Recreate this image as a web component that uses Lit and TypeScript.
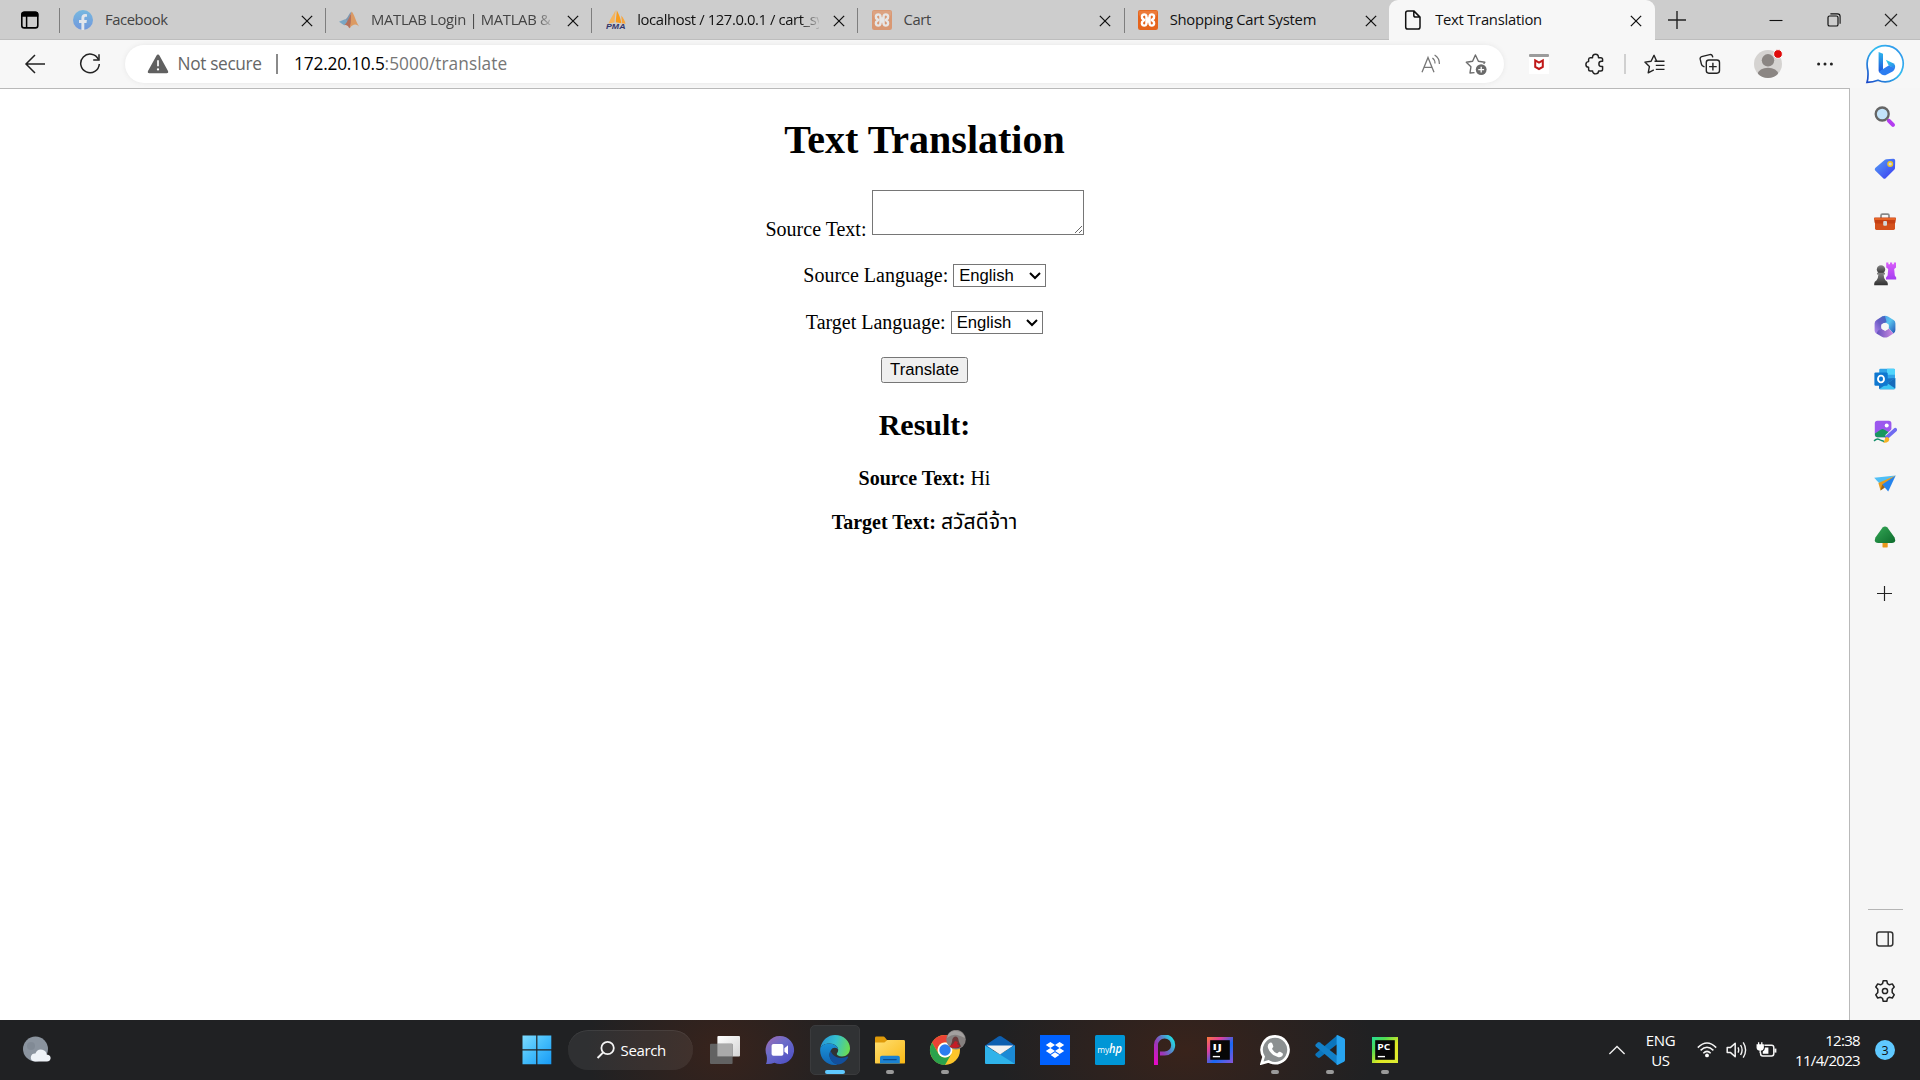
import { LitElement, html, svg, css, nothing } from "lit";
import { customElement, property } from "lit/decorators.js";

const box = (w: number, h: number, body: unknown, vb = `0 0 ${w} ${h}`) =>
  html`<svg width=${w} height=${h} viewBox=${vb} fill="none">${body}</svg>`;

/* ---------- browser chrome icons ---------- */
const cross = (s: number, c = "#111", w = 1.5) =>
  box(s, s, svg`<path d="M1 1L13 13M13 1L1 13" stroke=${c} stroke-width=${w}/>`, "0 0 14 14");

const tabActions = box(20, 20, svg`<rect x="1.8" y="2.3" width="16" height="15.6" rx="2.4" stroke="#000" stroke-width="1.6"/><path d="M1.5 6.8V4.6Q1.5 1.6 4.5 1.6H15.3Q18.3 1.6 18.3 4.6V6.8Z" fill="#000"/><path d="M6.6 6V17.6" stroke="#000" stroke-width="1.5"/>`);

const facebook = box(20, 20, svg`<defs><linearGradient id="f" x1="0" y1="0" x2="0" y2="1"><stop stop-color="#76b8e0"/><stop offset="1" stop-color="#7197dc"/></linearGradient></defs><circle cx="10" cy="10" r="10" fill="url(#f)"/><path d="M8.4 19.9V13H6V10.1H8.4V7.9C8.4 5.3 9.9 4 12.1 4L14 4.2V6.7H12.8C11.6 6.7 11.3 7.4 11.3 8.2V10.1H13.9L13.5 13H11.3V19.9Z" fill="#e3e6ec"/>`);

const matlab = box(20, 20, svg`<path d="M0 11.8L6 9.3L9 12.4L5.2 15.2Z" fill="#79a6c4"/><path d="M6 9.3C8.5 9 10 3.5 12.4 1.8L9 12.4Z" fill="#7d97b0"/><path d="M5.2 15.2C8.5 14 9.6 17.4 10.4 18.2C12.5 17.2 12 12 12.8 2C10.5 5.5 9.5 11.5 5.2 15.2Z" fill="#b4705b"/><path d="M12.6 1.6C15 3.5 17 12 20 16.6C17.4 13.4 14 13.6 10.4 18.2C12.6 14 11.6 6 12.6 1.6Z" fill="#dc9a62"/>`);

const pma = box(20, 20, svg`<path d="M9.5 0C8 4 4 9 2.5 13.5L8.6 12.4C8.4 8 9.8 4 9.5 0Z" fill="#f5b45d"/><path d="M10.8 .2C10.6 5 9.8 9 9.8 12.2L15.4 13.2C14.6 8 12.8 4 10.8 .2Z" fill="#f89c1c"/><path d="M15.2 5.6L16 13.3L19.6 13.8C18.6 10.5 17.2 8 15.2 5.6Z" fill="#f9a53a"/><text x="0" y="19" font-family="Liberation Sans" font-size="7.6" font-weight="700" font-style="italic" fill="#33366b" textLength="19.5" lengthAdjust="spacingAndGlyphs">PMA</text>`);

const xampp = (dim: boolean) => box(20, 20, svg`<g opacity=${dim ? 0.5 : 1}><rect width="20" height="20" rx="2.2" fill="#e5641c"/><rect x=".8" y=".8" width="18.4" height="5" rx="1.4" fill="#f08b4f" opacity=".6"/><path d="M6.3 4.4C3.4 4.4 3.2 8 5.2 9.1L6.3 10L5.2 10.9C3.2 12 3.4 15.6 6.3 15.6C8.7 15.6 8.6 13.2 8.4 11.6H11.6C11.4 13.2 11.3 15.6 13.7 15.6C16.6 15.6 16.8 12 14.8 10.9L13.7 10L14.8 9.1C16.8 8 16.6 4.4 13.7 4.4C11.3 4.4 11.4 6.8 11.6 8.4H8.4C8.6 6.8 8.7 4.4 6.3 4.4Z" stroke="#fff" stroke-width="2.45" stroke-linejoin="round"/><path d="M7.4 10H12.6" stroke="#fff" stroke-width="2"/></g>`);

const pageIcon = box(20, 20, svg`<path d="M4.8 .9H10.8L17 7.1V17Q17 19.1 14.9 19.1H4.8Q2.7 19.1 2.7 17V3Q2.7 .9 4.8 .9ZM10.8 1V5.2Q10.8 7.1 12.7 7.1H17" stroke="#111" stroke-width="1.5" stroke-linejoin="round"/>`);

const plus = (s: number, c = "#222") => box(s, s, svg`<path d="M9 0V18M0 9H18" stroke=${c} stroke-width="1.4"/>`, "0 0 18 18");
const minimize = box(14, 14, svg`<path d="M.5 7.5H13.5" stroke="#111" stroke-width="1.1"/>`);
const restore = box(14, 14, svg`<rect x="1" y="3" width="10" height="10" rx="1.6" stroke="#111" stroke-width="1.2"/><path d="M3.4 .9H10.5Q13.1 .9 13.1 3.5V10.8" stroke="#111" stroke-width="1.1"/>`);

const back = box(22, 20, svg`<path d="M11 1L2 10L11 19M2 10H21" stroke="#222" stroke-width="1.5"/>`);
const refresh = box(22, 22, svg`<path d="M19.4 6.4A9.3 9.3 0 1 0 20.3 11" stroke="#222" stroke-width="1.5"/><path d="M20 1.2V6.9H14.2" stroke="#222" stroke-width="1.5"/>`);
const warning = box(22, 20, svg`<path d="M11 .6Q12 .6 12.6 1.7L21 17Q21.8 19.2 19.6 19.2H2.4Q.2 19.2 1 17L9.4 1.7Q10 .6 11 .6Z" fill="#606060"/><path d="M11 6.3V12.3" stroke="#fff" stroke-width="1.7"/><circle cx="11" cy="15.4" r="1.15" fill="#fff"/>`);
const readAloud = box(20, 20, svg`<path d="M1 18.2L7 3.4L13 18.2M3 13.3H11" stroke="#777" stroke-width="1.3"/><path d="M11.4 4Q14 5.8 14 9.4M13.6 .9Q18.6 4 18.4 10" stroke="#777" stroke-width="1.2"/>`);
const starAdd = box(22, 22, svg`<path d="M9.5 19.6L5 20L5.9 13.8L1.3 9.3L7.6 8.3L10.4 2L13.4 8.3L19.8 9.3L18.6 10.8" stroke="#6d6d6d" stroke-width="1.4" stroke-linejoin="round"/><circle cx="16.2" cy="16.6" r="5.4" fill="#6a6a6a"/><path d="M16.2 13.7V19.5M13.3 16.6H19.1" stroke="#fff" stroke-width="1.3"/>`);
const mcafee = box(20, 20, svg`<rect width="20" height="20" fill="#fff"/><rect width="20" height="3" rx="1" fill="#9c9c9c"/><path d="M6.2 6.4L10 8.6L13.8 6.4V12.9L10 15L6.2 12.9Z" stroke="#c01818" stroke-width="2"/>`);
const puzzle = box(20, 22, svg`<path d="M5.2 4.7H7.5C7.5 .2 13.5 .2 13.5 4.7H15.8Q17.6 4.7 17.6 6.5V8.3H16.6C13 8.3 13 13.5 16.6 13.5H17.6V16.2Q17.6 18 15.8 18H13.6C13.6 21.8 7.6 21.8 7.6 18H5.4Q3.6 18 3.6 16.2V14.3C0 14.3 0 8.6 3.6 8.6V6.5Q3.6 4.7 5.2 4.7Z" stroke="#222" stroke-width="1.45" stroke-linejoin="round"/>`);
const favorites = box(21, 20, svg`<path d="M10.5 7.2H12.7L10 1.3L7.1 7.2L.9 8.1L5.4 12.6L4.2 18.8L9.8 15.8" stroke="#222" stroke-width="1.4" stroke-linejoin="round"/><path d="M12.4 7.2H20.5M11.8 11.4H20.5M11.8 15.4H20.5" stroke="#222" stroke-width="1.4"/>`);
const collections = box(22, 22, svg`<path d="M5.5 13.8L4.4 13.4Q2.8 12.8 2.4 11.2L1.2 6.2Q.8 4.2 2.6 3.7L10.8 1.6Q12.8 1.2 13.4 3L13.8 4.4" stroke="#222" stroke-width="1.4"/><rect x="7.3" y="7" width="13.2" height="13.2" rx="2.6" stroke="#222" stroke-width="1.4"/><path d="M13.9 9.8V17.4M10.1 13.6H17.7" stroke="#222" stroke-width="1.4"/>`);
const avatar = box(30, 30, svg`<defs><clipPath id="av"><circle cx="15" cy="15" r="14"/></clipPath></defs><circle cx="15" cy="15" r="14" fill="#d5d3d1"/><g clip-path="url(#av)" fill="#8b8683"><circle cx="15" cy="11.3" r="6.2"/><ellipse cx="15" cy="25" rx="10" ry="6.2"/></g><circle cx="25" cy="5" r="4.4" fill="#e00b0b" stroke="#f7f7f7"/>`);
const dots = box(18, 6, svg`<g fill="#222"><circle cx="2.6" cy="3" r="1.5"/><circle cx="9" cy="3" r="1.5"/><circle cx="15.4" cy="3" r="1.5"/></g>`);
const bing = box(40, 40, svg`<defs><linearGradient id="b1" x1="1" y1="0" x2="0" y2="1"><stop stop-color="#2f8bea"/><stop offset=".45" stop-color="#35c0f0"/><stop offset="1" stop-color="#1746c8"/></linearGradient><linearGradient id="b2" x1="0" y1="0" x2="0" y2="1"><stop stop-color="#2fb7ee"/><stop offset="1" stop-color="#1c50d8"/></linearGradient><linearGradient id="b3" x1="0" y1="0" x2="1" y2="1"><stop stop-color="#35d6e6"/><stop offset="1" stop-color="#2680ec"/></linearGradient></defs><path d="M20.4 1.7A18 18 0 1 1 13 36.2Q8 38.2 2 38.4Q3.4 34 2.9 27Q2 23 2.1 19.6A18.2 18.2 0 0 1 20.4 1.7Z" fill="#fff" stroke="url(#b1)" stroke-width="1.7"/><path d="M13.6 8L18 9.7V25.2L14.6 28.8Q13.6 28 13.6 26.6Z" fill="url(#b2)"/><path d="M20.8 15.7L28.2 19.3Q31 21 29.8 24.4L23.7 21.6Z" fill="url(#b3)"/><path d="M14 27.6L23.7 21.6L29.8 24Q29.6 26.2 27.6 27.4L20.4 31.2Q16.2 31.8 14 27.6Z" fill="#2c7df0"/>`);

/* ---------- sidebar icons ---------- */
const side = [
  box(22, 22, svg`<circle cx="8.2" cy="8" r="6.5" fill="#c3e4fb" stroke="#656565" stroke-width="2.3"/><path d="M12.8 12.6L15 14.8" stroke="#777" stroke-width="2.4"/><path d="M15 14.8L19 18.8" stroke="#b43cf0" stroke-width="4" stroke-linecap="round"/>`),
  box(22, 22, svg`<defs><linearGradient id="tg" x1="0" y1="0" x2="1" y2="1"><stop stop-color="#55a0f4"/><stop offset="1" stop-color="#3b38f2"/></linearGradient></defs><path d="M12.4 1.2L19.4 .8Q21.2 .8 21.2 2.6L21 10Q21 11 20.2 11.8L11.7 20.3Q10.4 21.4 9.2 20.3L1.2 12.4Q.2 11 1.2 9.9L10.6 2Q11.3 1.3 12.4 1.2Z" fill="url(#tg)"/><circle cx="16.2" cy="6" r="2.3" fill="#c7d6ee" stroke="#f2c61d" stroke-width="1.4"/>`),
  box(24, 22, svg`<path d="M8 7V4.6Q8 3.2 9.4 3.2H14.6Q16 3.2 16 4.6V7" stroke="#888" stroke-width="1.7"/><rect x="2" y="10" width="20" height="9" rx="1.4" fill="#d4501c"/><path d="M1.8 6.4H22.2Q23 6.4 23 7.4L22.4 11.4Q22.2 12.4 21 12.4H3Q1.8 12.4 1.6 11.4L1 7.4Q1 6.4 1.8 6.4Z" fill="#c53f12"/><path d="M1.4 7.2H22.6V8.8H1.4Z" fill="#ed6d2c"/><rect x="10.2" y="10" width="3.8" height="4.8" rx="1" fill="#d3d7da"/>`),
  box(24, 24, svg`<defs><linearGradient id="pw" x1="0" y1="0" x2="0" y2="1"><stop stop-color="#858585"/><stop offset="1" stop-color="#303030"/></linearGradient><linearGradient id="rk" x1="0" y1="0" x2="0" y2="1"><stop stop-color="#d95dfa"/><stop offset="1" stop-color="#a43df0"/></linearGradient></defs><path d="M13.2 .6H15.4V2.2H17V.6H19.2V2.2H20.8V.6H23V5.6L21.2 7L21.8 13.4L23.2 15.4V17.6H13V15.4L14.6 13.4L15.2 7L13.2 5.6Z" fill="url(#rk)"/><circle cx="8" cy="7.5" r="4.2" fill="url(#pw)"/><path d="M4 10.8H12V12.6H10.6Q10.8 16.6 12.4 18.2Q14.8 19.4 14.8 21.4V23.2H1.2V21.4Q1.2 19.4 3.6 18.2Q5.2 16.6 5.4 12.6H4Z" fill="url(#pw)"/>`),
  box(22, 24, svg`<defs><linearGradient id="o1" x1="0" y1="0" x2="1" y2="1"><stop stop-color="#4f9be8"/><stop offset=".45" stop-color="#58c4ee"/><stop offset="1" stop-color="#2250b4"/></linearGradient><linearGradient id="o2" x1="0" y1="0" x2="1" y2="0"><stop stop-color="#6250bd"/><stop offset="1" stop-color="#ce8be0"/></linearGradient><linearGradient id="o3" x1="1" y1="0" x2="0" y2="1"><stop stop-color="#3a6cc4"/><stop offset=".5" stop-color="#6b5cc4"/><stop offset="1" stop-color="#b58cf0"/></linearGradient></defs><path d="M8 1.6Q11 0 14 1.6L19.6 5Q21.4 6 21.4 8.4V15Q21.4 17.5 19.4 18.6L14.6 13V9.4L8 6Z" fill="url(#o1)"/><path d="M11 .9L8 1.6L2.6 5Q.6 6.2 .6 8.6V15.4Q.6 17.4 2.4 18.5L7.4 13.6V9.6L12.6 7Z" fill="url(#o3)"/><path d="M2.4 18.5L8.3 22Q11 23.2 14 22L19.4 18.6L14.8 13.4L11.2 16L7.4 13.6L4 15.8Z" fill="url(#o2)"/><circle cx="11" cy="11.6" r="3.7" fill="#f6f6f6"/>`),
  box(22, 22, svg`<rect x="5.2" y=".8" width="15.8" height="17" rx="1.2" fill="#31a4e8"/><path d="M13 .8H19.8Q21 .8 21 2V6.8H13Z" fill="#50d4fc"/><path d="M5 11L21.2 10V20Q21.2 21.2 20 21.2H6.2Q5 21.2 5 20Z" fill="#1a73c6"/><path d="M21.2 10L5.4 21Q6 21.2 8 21.2H20Q21.2 21.2 21.2 20Z" fill="#3bc4f4"/><path d="M13.5 15.2L21.2 20.6V10Z" fill="#176bbb"/><rect x=".4" y="4.4" width="13.3" height="13.3" rx="1.2" fill="#0f78d0"/><ellipse cx="7" cy="11" rx="3" ry="3.4" stroke="#fff" stroke-width="1.9"/>`),
  box(24, 24, svg`<rect x="1.8" y=".8" width="16.6" height="16.4" rx="2.6" fill="#9b58ee"/><circle cx="13.7" cy="5.4" r="2" fill="#fff"/><path d="M2 13.4L8 9.4Q9.6 8.6 11 9.4L17.2 13Q18 17.2 15.4 17.2H4.6Q1.8 17.2 2 13.4Z" fill="#17975f"/><path d="M1 20.8Q4 18.4 6 19.4T8.4 20.4T11.5 21.6" stroke="#13906b" stroke-width="1.5"/><path d="M14 17.2L22 9.8" stroke="#f6f6f6" stroke-width="5.4"/><path d="M14 17.2L22.2 9.8" stroke="#6f6af1" stroke-width="3.8" stroke-linecap="round"/><path d="M10.2 22.8Q11.6 21.6 11.8 19.2Q12.4 16.4 15 17.3Q17.2 19 15.6 21.2Q13.4 23.2 10.2 22.8Z" fill="#f6b323"/>`),
  box(24, 20, svg`<path d="M1.2 3.8L22.7 1.6L6.5 9.5Z" fill="#50bff5"/><path d="M22.7 1.6L5.4 9L7.5 16.4Z" fill="#e89d1e"/><path d="M22.7 1.6L15.2 17.4L9.2 10.5Z" fill="#2583ec"/><path d="M7.5 16.4L9.2 10.5L12 13.6Z" fill="#9a641b"/>`),
  box(22, 24, svg`<defs><linearGradient id="tr" x1="0" y1="0" x2="1" y2="1"><stop stop-color="#35a957"/><stop offset="1" stop-color="#0d6b2c"/></linearGradient></defs><rect x="8.5" y="16" width="5.2" height="6.4" rx=".6" fill="#e8981c"/><path d="M8.6 2.6Q11 .4 13.4 2.6L20.4 12.2Q22.8 17.8 17.8 18H4.2Q-.8 17.8 1.6 12.2Z" fill="url(#tr)"/>`),
];
const panel = box(20, 18, svg`<rect x="1.8" y="1.9" width="16" height="14" rx="2.4" stroke="#333" stroke-width="1.5"/><path d="M13.2 2V16" stroke="#333" stroke-width="1.4"/>`);
const gear = box(24, 24, svg`<path d="M10.2 1.8H13.8L14.5 4.7L16.4 5.8L19.3 4.9L21.2 8L19.2 10.2V13.4L21.2 15.8L19.3 19L16.4 18.2L14.5 19.3L13.8 22.2H10.2L9.5 19.3L7.6 18.2L4.7 19L2.8 15.8L4.8 13.4V10.2L2.8 8L4.7 4.9L7.6 5.8L9.5 4.7Z" stroke="#222" stroke-width="1.5" stroke-linejoin="round"/><circle cx="12" cy="12" r="2.6" stroke="#222" stroke-width="1.5"/>`);

/* ---------- taskbar icons ---------- */
const weather = box(30, 28, svg`<circle cx="13.5" cy="13" r="12.5" fill="#8b949f"/><circle cx="9" cy="10" r="4" fill="#7b8490" opacity=".6"/><path d="M13 25.6Q8.4 25 8.8 21Q9.6 17.4 13.4 17.6Q15.4 12.6 20.4 13.8Q24.4 15 24.6 18.4Q29 18.8 28.6 22.6Q28 25.4 25 25.6Z" fill="#eef2f7"/>`);
const windows = box(30, 30, svg`<defs><linearGradient id="wn" x1="0" y1="0" x2="30" y2="30" gradientUnits="userSpaceOnUse"><stop stop-color="#7fdcff"/><stop offset=".5" stop-color="#42bcfb"/><stop offset="1" stop-color="#1699f5"/></linearGradient></defs><path d="M.5 .5H14.2V14.2H.5ZM15.4 .5H29.3V14.2H15.4ZM.5 15.4H14.2V29.3H.5ZM15.4 15.4H29.3V29.3H15.4Z" fill="url(#wn)"/>`);
const search = box(20, 20, svg`<circle cx="11.6" cy="8" r="6.2" stroke="#f4f4f4" stroke-width="1.8"/><path d="M7.2 12.4L1.6 18" stroke="#f4f4f4" stroke-width="2"/>`);
const taskview = box(30, 30, svg`<defs><linearGradient id="tv" x1="0" y1="0" x2="1" y2="1"><stop stop-color="#fff"/><stop offset="1" stop-color="#d4d4d4"/></linearGradient></defs><rect x="7.4" y="1" width="22.6" height="20.4" rx="1" fill="url(#tv)"/><rect x="0" y="8.8" width="22.6" height="20.2" rx="1" fill="#626262"/><rect x="7.4" y="8.8" width="15.2" height="12.6" fill="#aaa"/>`);
const chat = box(30, 30, svg`<defs><linearGradient id="ch" x1="0" y1="0" x2=".8" y2="1"><stop stop-color="#a26ab0"/><stop offset=".45" stop-color="#6b6cc9"/><stop offset="1" stop-color="#4e4fc4"/></linearGradient></defs><path d="M15 1A14 14 0 1 1 9.4 27.8Q5.5 29.5 1 29Q2.6 25 1.5 20A14 14 0 0 1 15 1Z" fill="url(#ch)"/><rect x="6.6" y="9" width="11.8" height="11.8" rx="1.8" fill="#fff"/><path d="M19.4 13.2L23 10.2V19.6L19.4 16.8Z" fill="#fff"/>`);
const edge = box(30, 30, svg`<defs><linearGradient id="e1" x1="0" y1=".3" x2="1" y2=".5"><stop stop-color="#2796d8"/><stop offset=".5" stop-color="#35c1cf"/><stop offset="1" stop-color="#6bdc53"/></linearGradient><linearGradient id="e2" x1="0" y1="0" x2="0" y2="1"><stop stop-color="#1a93d8"/><stop offset="1" stop-color="#1165b4"/></linearGradient></defs><path d="M.4 12.6C2.4 4.6 8.2 0 15 0C23.8 0 30 6.2 30 13.2C30 18.4 26.4 21.4 22 21.4C18.4 21.4 16.8 20 16.8 19C16.8 18 18.2 17.4 18.2 15C18.2 11.8 14.8 8.6 9.6 8.6C4.2 8.6 1.6 11 .4 12.6Z" fill="url(#e1)"/><path d="M.4 12.6C2 10 5 8.4 8.8 8.4C14.4 8.4 18.2 11.4 18.2 14.8C17.4 12.6 12.6 11.6 10.8 15.4C7 21 11.8 28.2 17.8 29.4C8.4 32.2 -1.6 24 .4 12.6Z" fill="url(#e2)"/><path d="M10.8 15.4C7 21 11.6 28.8 18.2 29.6C22.6 28.8 26.4 25.8 28.2 22.2C28.4 21.4 27.8 21.2 27.2 21.6C21.6 24.6 12 22.4 10.8 15.4Z" fill="#124f9c"/>`);
const folder = box(30, 28, svg`<defs><linearGradient id="fd" x1="0" y1="0" x2="1" y2="1"><stop stop-color="#ffdf72"/><stop offset="1" stop-color="#f9b814"/></linearGradient></defs><path d="M0 2Q0 .6 1.4 .6H8.4Q9.4 .6 10 1.4L12 4H27V9H0Z" fill="#df9a09"/><path d="M0 6.4H9.4L12.4 4H28.6Q30 4 30 5.4V26.4Q30 27.6 28.8 27.6H1.2Q0 27.6 0 26.4Z" fill="url(#fd)"/><path d="M5 27.6V21.6Q5 19.8 6.8 19.8H23Q24.8 19.8 24.8 21.6V27.6Z" fill="#1b82d2"/><path d="M8.6 23.6H21.2" stroke="#0b4d8e" stroke-width="1.2" stroke-linecap="round"/>`);
const chrome = html`<svg width="44" height="40" viewBox="-3 0 44 40" fill="none"><circle cx="19" cy="20" r="15" fill="#fcc52a"/><path d="M6 12.5A15 15 0 0 1 32 12.5H19A7.5 7.5 0 0 0 12.5 23.8Z" fill="#ea4335"/><path d="M6 12.5A15 15 0 0 0 19 35L25.5 23.8A7.5 7.5 0 0 1 12.5 23.8Z" fill="#2ba24c"/><circle cx="19" cy="20" r="7.4" fill="#fff"/><circle cx="19" cy="20" r="5.7" fill="#2d7df0"/><circle cx="30" cy="9.6" r="9.8" fill="#85807f"/><path d="M21 8Q22 2 28 1Q37 0 39 8Q35 6 31 5Q26 4 21 8Z" fill="#a3a09f"/><path d="M26.4 9Q29 4.8 32 8L33 12L35 16.4Q31 20 24 17L26 12Z" fill="#6b3a3a"/><path d="M29 11L32 12L31 14L34 16Q29 19.6 23.4 16.6L27 14Z" fill="#c41d26"/></svg>`;
const mail = box(30, 30, svg`<path d="M0 10.4L13.4 1.4Q15 .4 16.6 1.4L30 10.4V15H0Z" fill="#0d5fb0"/><path d="M0 10.4L15 19.4L30 10.4V28Q30 29 29 29H1Q0 29 0 28Z" fill="#2fb3ea"/><path d="M30 10.4L15 19.4L30 29Z" fill="#1b8ad5"/><path d="M1.6 10.4H28.4L15 19.4Z" fill="#f2f2f2"/>`);
const dropbox = box(30, 30, svg`<rect width="30" height="30" fill="#0061fe"/><path d="M10.4 7L15 10L10.4 13L5.8 10ZM19.6 7L24.2 10L19.6 13L15 10ZM10.4 13L15 16L10.4 19L5.8 16ZM19.6 13L24.2 16L19.6 19L15 16ZM15 17.2L19.4 20.1L15 23L10.6 20.1Z" fill="#fff"/>`);
const myhp = box(30, 30, svg`<rect width="30" height="30" rx="1.5" fill="#0096d6"/><text x="2.2" y="18" font-family="Open Sans" font-size="8.6" fill="#fff" textLength="12" lengthAdjust="spacingAndGlyphs">my</text><text x="14" y="18.2" font-family="Open Sans" font-style="italic" font-weight="600" font-size="12.5" fill="#fff" textLength="13" lengthAdjust="spacingAndGlyphs">hp</text>`);
const picsart = box(24, 30, svg`<defs><linearGradient id="pa" x1="1" y1="0" x2="0" y2="1"><stop offset=".05" stop-color="#20dfe6"/><stop offset=".35" stop-color="#5a7fc8"/><stop offset=".6" stop-color="#9a38b8"/><stop offset="1" stop-color="#e808c6"/></linearGradient></defs><path d="M3 30V10.2A8.6 8.6 0 1 1 11.3 18.6H7" stroke="url(#pa)" stroke-width="4"/>`);
const jet = (id: string, txt: string, stops: string[]) => box(26, 26, svg`<defs><linearGradient id=${id} x1="0" y1="0" x2="1" y2="1"><stop stop-color=${stops[0]}/><stop offset=".28" stop-color=${stops[1]}/><stop offset=".6" stop-color=${stops[2]}/><stop offset="1" stop-color=${stops[3]}/></linearGradient></defs><rect width="26" height="26" fill=${`url(#${id})`}/><rect x="3.2" y="3.2" width="19.6" height="19.6" fill="#070707"/><text x="5.2" y="13.2" font-family="Open Sans" font-weight="700" font-size="9.6" fill="#fff" textLength=${txt === "PC" ? 13 : 10} lengthAdjust="spacingAndGlyphs">${txt}</text><path d="M5.8 19.6H13" stroke="#fff" stroke-width="1.4"/>`);
const whatsapp = box(30, 30, svg`<path d="M15.2 1.4A13.4 13.4 0 1 1 8.4 26.4L1.6 28.4L3.6 21.8A13.4 13.4 0 0 1 15.2 1.4Z" fill="#8c9091" stroke="#fff" stroke-width="2.6"/><path d="M9.8 7.8Q11.6 7 12.4 8.8L13.2 11Q13.6 12 12.6 12.8Q11.8 13.4 12.4 14.4Q14 17 16.6 18.2Q17.4 18.6 18 17.8Q19 16.4 20 16.8L22.2 18Q23.4 18.6 22.6 20.4Q21.2 22.8 17.8 22Q10.2 19.8 8 13Q7 9.4 9.8 7.8Z" fill="#fff"/>`);
const vscode = box(30, 30, svg`<path d="M22 .4L22.4 9L5 22.6Q3.8 23.4 2.8 22.6L.8 20.8Q-.2 19.8 .8 18.6Z" fill="#0b75bc"/><path d="M22 29.6L22.4 21L5 7.4Q3.8 6.6 2.8 7.4L.8 9.2Q-.2 10.2 .8 11.4Z" fill="#1380c8"/><path d="M21.6 .2Q22.2 0 23 .3L29 3.2Q30 3.8 30 5V25Q30 26.2 29 26.8L23 29.7Q22.2 30 21.6 29.8Z" fill="#28a4f0"/>`);

const chevron = box(18, 12, svg`<path d="M1.4 10L9 2.4L16.6 10" stroke="#eee" stroke-width="1.4"/>`);
const wifi = box(20, 18, svg`<g stroke="#f4f4f4" stroke-width="1.5"><path d="M.8 6.6Q10 -2.6 19.2 6.6"/><path d="M3.6 9.4Q10 3 16.4 9.4"/><path d="M6.3 12.2Q10 8.6 13.7 12.2"/></g><circle cx="10" cy="14.4" r="1.9" fill="#fff"/>`);
const speaker = box(22, 20, svg`<path d="M1.2 7.4H4.6L9.2 3.2V16.8L4.6 12.6H1.2Z" stroke="#f4f4f4" stroke-width="1.5" stroke-linejoin="round"/><path d="M12 7.4Q13.4 10 12 12.6M14.6 5Q17.6 10 14.6 15M17.2 2.4Q22 10 17.2 17.6" stroke="#f4f4f4" stroke-width="1.4"/>`);
const battery = box(22, 18, svg`<path d="M8.4 4.2H15.6Q17.8 4.2 17.8 6.4V12.8Q17.8 15 15.6 15H6.8Q4.6 15 4.6 12.8V11.5" stroke="#f4f4f4" stroke-width="1.5"/><path d="M18.4 7.6H20.4V11.6H18.4Z" fill="#f4f4f4"/><path d="M9 6.4H12.4V12.8H6.8V10.4Q9 9 9 6.4Z" fill="#fff"/><path d="M1.2 4H7.2V6.6Q7 9 4.2 9Q1.4 9 1.2 6.6ZM2.6 1.2V4M5.8 1.2V4M4.2 9V12" fill="#fff" stroke="#fff" stroke-width="1.3"/>`);

const tabs = [
  { icon: facebook, title: "Facebook", dim: true, cls: "fb" },
  { icon: matlab, title: "MATLAB Login | MATLAB & Simulink", dim: true, cls: "ml" },
  { icon: pma, title: "localhost / 127.0.0.1 / cart_system", dim: false, cls: "pm" },
  { icon: xampp(true), title: "Cart", dim: true, cls: "ct" },
  { icon: xampp(false), title: "Shopping Cart System", dim: false, cls: "sc" },
  { icon: pageIcon, title: "Text Translation", dim: false, cls: "active" },
];

@customElement("tab-strip")
class TabStrip extends LitElement {
  static styles = css`
    :host { display: flex; height: 40px; background: #cdcdcd; font: 14.8px "Open Sans", sans-serif; color: #111; box-shadow: inset 0 -1px #bdbdbd; }
    svg { display: block; }
    .lead { width: 59px; display: flex; align-items: center; justify-content: center; box-sizing: border-box; }
    .tab { width: 266.2px; box-sizing: border-box; display: flex; align-items: center; padding-left: 13.8px; }
    .sep { width: 1px; height: 25px; background: #7e7e7e; margin-left: -14px; margin-right: 13.4px; }
    .title { flex: none; margin-left: 11.7px; flex-basis: 182px; overflow: hidden; white-space: nowrap; line-height: 24px; padding-bottom: 2px; letter-spacing: -.38px; }
    .ml .title { letter-spacing: -.32px; }
    .pm .title { letter-spacing: -.39px; }
    .fade { -webkit-mask-image: linear-gradient(90deg, #000 164px, transparent 184px); }
    .dim { color: #444; }
    .x { margin-left: 13.8px; padding-top: 2px; }
    .sc .title, .active .title { letter-spacing: -.25px; }
    .active { background: #f7f7f7; border-radius: 9px 9px 0 0; margin-left: -1px; width: 266.2px; padding-left: 14.5px; }
    .active .x { margin-left: 13.1px; }
    .new { width: 44px; display: grid; place-items: center; }
    .space { flex: 1; }
    .win { width: 57.5px; display: grid; place-items: center; }
  `;
  render() {
    return html`<div class="lead">${tabActions}</div>
      ${tabs.map((t) => html`<div class="tab ${t.cls}">
        ${t.cls === "active" ? nothing : html`<i class="sep"></i>`}
        ${t.icon}<span class="title ${t.dim ? "dim" : ""} ${t.title.length > 25 ? "fade" : ""}">${t.title}</span>
        <span class="x">${cross(12)}</span></div>`)}
      <div class="new">${plus(18)}</div><div class="space"></div>
      <div class="win">${minimize}</div><div class="win">${restore}</div><div class="win">${cross(14, "#222", 1.1)}</div>`;
  }
}

@customElement("address-bar")
class AddressBar extends LitElement {
  static styles = css`
    :host { display: flex; align-items: center; height: 48px; background: #f7f7f7; font: 17.3px "Open Sans", sans-serif; }
    svg { display: block; }
    .c { display: grid; place-items: center; flex: none; }
    .w55 { width: 55px; padding-left: 7px; }
    .w50 { width: 56px; }
    .pill { width: 1379px; height: 38px; margin-left: 7px; margin-bottom: 1px; border-radius: 19px; background: #fff; box-shadow: 0 0 5px #e6e6e6; display: flex; align-items: center; padding-left: 22px; padding-right: 17.5px; box-sizing: border-box; flex: none; }
    .sec { color: #666; margin-left: 8.5px; width: 98.5px; letter-spacing: -.35px; white-space: nowrap; }
    .bar { width: 1.5px; height: 20px; background: #8a8a8a; margin-right: 16.6px; }
    .url { color: #000; flex: 1; letter-spacing: -.2px; }
    .rest { color: #767676; letter-spacing: .05px; }
    .aloud { margin-right: 24px; }
    .s70 { width: 70px; } .s40 { width: 41px; } .s22 { width: 20px; } .s38 { width: 39px; } .s72 { width: 72px; } .s44 { width: 44px; } .s50 { width: 50px; }
    .div { width: 2px; height: 20px; background: #d0d0d0; }
  `;
  render() {
    return html`<div class="c w55">${back}</div><div class="c w50">${refresh}</div>
      <div class="pill">${warning}<span class="sec">Not secure</span><i class="bar"></i>
        <span class="url">172.20.10.5<span class="rest">:5000/translate</span></span>
        <span class="aloud">${readAloud}</span>${starAdd}</div>
      <div class="c s70">${mcafee}</div><div class="c s40">${puzzle}</div><div class="c s22"><i class="div"></i></div>
      <div class="c s38">${favorites}</div><div class="c s72">${collections}</div><div class="c s44">${avatar}</div>
      <div class="c s70">${dots}</div><div class="c s50">${bing}</div>`;
  }
}

@customElement("translate-page")
class TranslatePage extends LitElement {
  static styles = css`
    :host { display: block; flex: 1; background: #fff; border-top: 1px solid #b9b9b9; border-right: 1px solid #b9b9b9; box-sizing: border-box; overflow: hidden; }
    .body { zoom: 1.25; padding: 0 8px; font: 16px "Liberation Serif", "Noto Sans Thai", serif; text-align: center; color: #000; }
    h1 { font-size: 32px; margin: 0; padding-top: 21.4px; margin-bottom: 21.4px; }
    form { line-height: 18.8px; }
    h2 { font-size: 24px; margin: 19.9px 0; }
    p { margin: 16px 0; }
    .target { margin-top: 17px; }
    .thai { font-size: 17px; line-height: 1; }
    textarea { width: 169.6px; height: 36px; box-sizing: border-box; border: .8px solid #767676; border-radius: 0; margin: 0 0 -.8px; padding: 2px; vertical-align: 0; }
    .source { margin-bottom: 18px; }
    select { font: 13.333px "Liberation Sans", sans-serif; width: 74px; height: 18.4px; border: .8px solid #767676; border-radius: 0; background: #fff; color: #000; margin: 0; box-sizing: border-box; vertical-align: .8px; }
    button { font: 13.333px "Liberation Sans", sans-serif; width: 69.6px; height: 20.8px; padding: 0; border: .8px solid #767676; border-radius: 2px; background: #efefef; color: #000; vertical-align: .8px; }
    .source textarea { margin: 0; vertical-align: .8px; }
    .submit { margin-top: -.5px; }
  `;
  render() {
    return html`<div class="body"><h1>Text Translation</h1>
      <form><div class="source"><label>Source Text:</label> <textarea></textarea></div>
      <label>Source Language:</label> <select><option>English</option></select><br><br>
      <label>Target Language:</label> <select><option>English</option></select><br><br>
      <div class="submit"><button type="button">Translate</button></div></form>
      <h2>Result:</h2><p><b>Source Text:</b> Hi</p><p class="target"><b>Target Text:</b> <span class="thai">สวัสดีจ้าา</span></p></div>`;
  }
}

@customElement("edge-sidebar")
class EdgeSidebar extends LitElement {
  static styles = css`
    :host { display: flex; flex-direction: column; align-items: center; width: 70px; background: #f6f6f6; box-sizing: border-box; padding: 2.3px 0 0 0; }
    svg { display: block; }
    .i { height: 52.5px; display: grid; place-items: center; flex: none; margin-right: 1px; }
    .add { height: 61px; }
    .space { flex: 1; }
    .line { width: 35px; height: 1px; background: #b5b5b5; margin-bottom: 5px; }
    .p { height: 47px; }
    .g { height: 58px; }
  `;
  render() {
    return html`${side.map((s) => html`<div class="i">${s}</div>`)}
      <div class="i add">${plus(15)}</div><div class="space"></div><div class="line"></div>
      <div class="i p">${panel}</div><div class="i g">${gear}</div>`;
  }
}

@customElement("task-item")
class TaskItem extends LitElement {
  @property() state = "";
  static styles = css`
    :host { width: 55px; height: 60px; display: grid; place-items: center; flex: none; }
    .cell { width: 50px; height: 50px; display: grid; place-items: center; border-radius: 5px; position: relative; box-sizing: border-box; }
    .focus { background: #303234; border: 1px solid #3a3b3d; }
    .dot { position: absolute; bottom: 1px; width: 8px; height: 4px; border-radius: 2px; background: #9a9a9a; }
    .focus .dot { width: 20px; background: #5fc9ff; bottom: 0; }
    ::slotted(*) { display: block; }
  `;
  render() {
    return html`<div class="cell ${this.state}"><slot></slot>${this.state ? html`<i class="dot"></i>` : nothing}</div>`;
  }
}

@customElement("win-taskbar")
class WinTaskbar extends LitElement {
  static styles = css`
    :host { display: flex; height: 60px; align-items: center; color: #fff; font: 15px "Open Sans", sans-serif;
      background: radial-gradient(ellipse 135px 110px at 722px 30px, #38231c, transparent), radial-gradient(ellipse 190px 110px at 1185px 30px, #39231b, transparent), #202123; }
    svg { display: block; }
    .weather { width: 521.5px; padding-left: 22px; box-sizing: border-box; }
    .search { width: 125px; height: 40px; border-radius: 20px; background: #ffffff12; box-shadow: inset 0 1px #ffffff12; margin: 0 4.5px 0 16.5px; display: flex; align-items: center; padding-left: 28px; box-sizing: border-box; gap: 4.5px; letter-spacing: -.35px; }
    .space { flex: 1; }
    .lang { width: 60px; text-align: center; line-height: 20px; margin-left: 4.5px; letter-spacing: -.3px; }
    .tray { display: flex; align-items: center; gap: 8.5px; margin-left: 6.5px; }
    .time { width: 82px; text-align: right; line-height: 20px; letter-spacing: -.68px; }
    .count { width: 20px; height: 20px; border-radius: 50%; background: #5fc9ff; color: #111; font-size: 12.5px; display: grid; place-items: center; margin: 0 25px 0 15px; }
  `;
  render() {
    const items: [unknown, string][] = [
      [taskview, ""], [chat, ""], [edge, "focus"], [folder, "open"], [chrome, "open"], [mail, ""], [dropbox, ""], [myhp, ""], [picsart, ""],
      [jet("ij", "IJ", ["#fc7a38", "#e0409c", "#1769f5", "#8a55d8"]), ""], [whatsapp, "open"], [vscode, "open"],
      [jet("pc", "PC", ["#22dc9a", "#52dc50", "#e0e822", "#dcec35"]), "open"],
    ];
    return html`<div class="weather">${weather}</div>${windows}
      <div class="search">${search}<span>Search</span></div>
      ${items.map(([icon, state]) => html`<task-item state=${state}>${icon}</task-item>`)}
      <div class="space"></div>${chevron}
      <div class="lang">ENG<br>US</div>
      <div class="tray">${wifi}${speaker}${battery}</div>
      <div class="time">12:38<br>11/4/2023</div><div class="count">3</div>`;
  }
}

@customElement("app-root")
class AppRoot extends LitElement {
  static styles = css`
    :host { display: flex; flex-direction: column; width: 1920px; height: 1080px; overflow: hidden; }
    .main { display: flex; flex: 1; min-height: 0; }
  `;
  render() {
    return html`<tab-strip></tab-strip><address-bar></address-bar>
      <div class="main"><translate-page></translate-page><edge-sidebar></edge-sidebar></div>
      <win-taskbar></win-taskbar>`;
  }
}
